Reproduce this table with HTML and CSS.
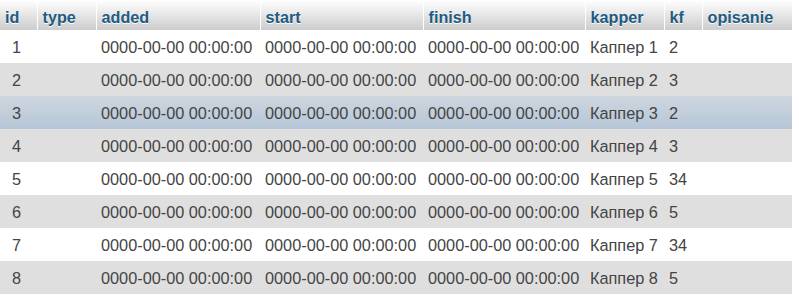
FILE: index.html
```html
<!DOCTYPE html>
<html>
<head>
<meta charset="utf-8">
<link rel="stylesheet" href="styles.css">
</head>
<body>
<table class="data">
  <colgroup>
    <col class="c-id"><col class="c-type"><col class="c-date"><col class="c-date2"><col class="c-date3"><col class="c-kapper"><col class="c-kf"><col class="c-op">
  </colgroup>
  <thead>
    <tr><th>id</th><th>type</th><th>added</th><th>start</th><th>finish</th><th>kapper</th><th>kf</th><th>opisanie</th></tr>
  </thead>
  <tbody>
    <tr class="odd"><td class="num">1</td><td></td><td>0000-00-00 00:00:00</td><td>0000-00-00 00:00:00</td><td>0000-00-00 00:00:00</td><td>Каппер 1</td><td>2</td><td></td></tr>
    <tr class="even"><td class="num">2</td><td></td><td>0000-00-00 00:00:00</td><td>0000-00-00 00:00:00</td><td>0000-00-00 00:00:00</td><td>Каппер 2</td><td>3</td><td></td></tr>
    <tr class="marked"><td class="num">3</td><td></td><td>0000-00-00 00:00:00</td><td>0000-00-00 00:00:00</td><td>0000-00-00 00:00:00</td><td>Каппер 3</td><td>2</td><td></td></tr>
    <tr class="even"><td class="num">4</td><td></td><td>0000-00-00 00:00:00</td><td>0000-00-00 00:00:00</td><td>0000-00-00 00:00:00</td><td>Каппер 4</td><td>3</td><td></td></tr>
    <tr class="odd"><td class="num">5</td><td></td><td>0000-00-00 00:00:00</td><td>0000-00-00 00:00:00</td><td>0000-00-00 00:00:00</td><td>Каппер 5</td><td>34</td><td></td></tr>
    <tr class="even"><td class="num">6</td><td></td><td>0000-00-00 00:00:00</td><td>0000-00-00 00:00:00</td><td>0000-00-00 00:00:00</td><td>Каппер 6</td><td>5</td><td></td></tr>
    <tr class="odd"><td class="num">7</td><td></td><td>0000-00-00 00:00:00</td><td>0000-00-00 00:00:00</td><td>0000-00-00 00:00:00</td><td>Каппер 7</td><td>34</td><td></td></tr>
    <tr class="even"><td class="num">8</td><td></td><td>0000-00-00 00:00:00</td><td>0000-00-00 00:00:00</td><td>0000-00-00 00:00:00</td><td>Каппер 8</td><td>5</td><td></td></tr>
  </tbody>
</table>
</body>
</html>
```

FILE: styles.css
```css
html, body {
  margin: 0;
  padding: 0;
  background: #fff;
}
body {
  font-family: "Liberation Sans", Arial, sans-serif;
  font-size: 16px;
  color: #444;
}
.data {
  border-collapse: collapse;
  table-layout: fixed;
  width: 792px;
}
.c-id { width: 37px; }
.c-type { width: 59px; }
.c-date { width: 164px; }
.c-date2 { width: 163px; }
.c-date3 { width: 162px; }
.c-kapper { width: 79px; }
.c-kf { width: 38px; }
.c-op { width: 90px; }
.data th {
  height: 30px;
  box-sizing: border-box;
  padding: 8px 0 4px 5px;
  line-height: 18px;
  text-align: left;
  vertical-align: top;
  font-weight: bold;
  font-size: 16.2px;
  color: #235a81;
  text-shadow: 0 1px 0 #fff;
  background: linear-gradient(#ffffff, #cccccc);
  border-right: 1px solid #fff;
  white-space: nowrap;
  overflow: hidden;
}
.data th:last-child { border-right: 0; }
.data td {
  height: 33px;
  box-sizing: border-box;
  padding: 0 0 0 5px;
  line-height: 18px;
  font-size: 16.3px;
  white-space: nowrap;
  overflow: hidden;
  vertical-align: middle;
}
.data td.num { padding-left: 12px; }
.data tr.odd { background: #fff; }
.data tr.even { background: #dfdfdf; }
.data tr.marked { background: linear-gradient(#ced6df, #b6c6d7); }
```
